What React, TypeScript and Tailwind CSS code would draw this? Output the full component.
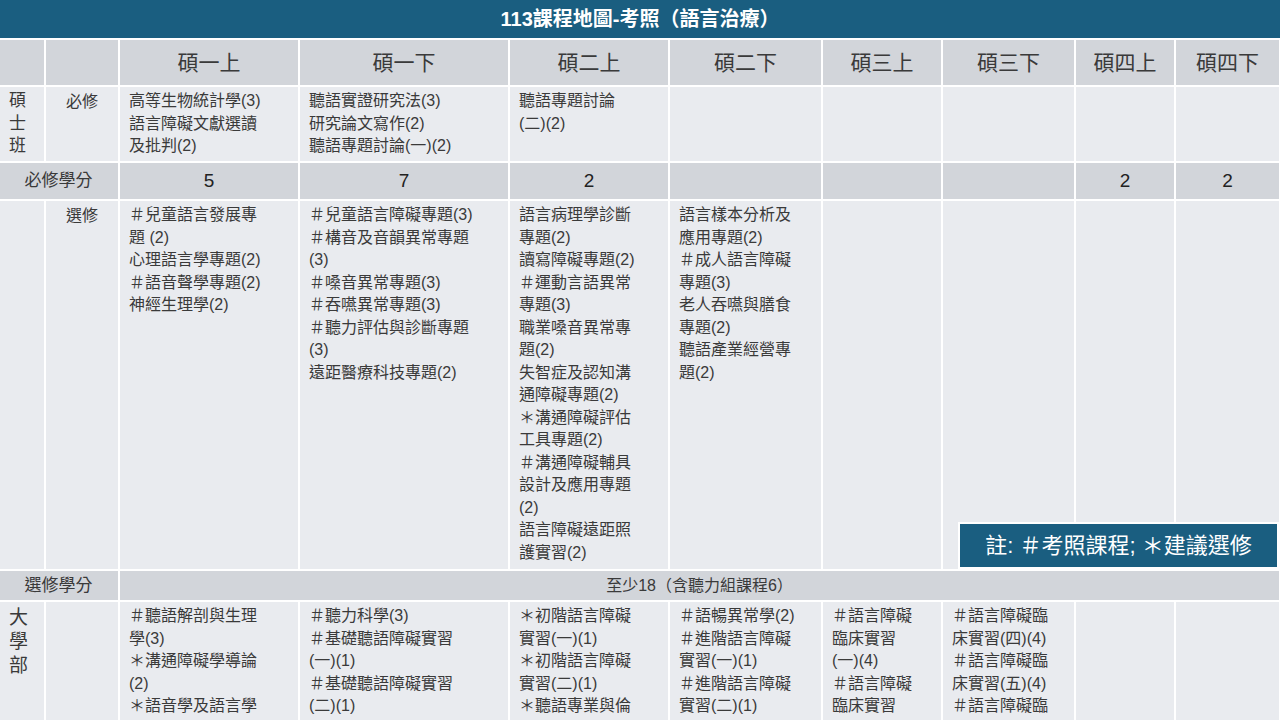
const F = { fontFamily: '"Liberation Sans","Noto Sans CJK TC",sans-serif' };

const cols = ["碩一上", "碩一下", "碩二上", "碩二下", "碩三上", "碩三下", "碩四上", "碩四下"];

const req = [
  ["高等生物統計學(3)", "語言障礙文獻選讀", "及批判(2)"],
  ["聽語實證研究法(3)", "研究論文寫作(2)", "聽語專題討論(一)(2)"],
  ["聽語專題討論", "(二)(2)"],
  [], [], [], [], [],
];
const reqCredits = ["5", "7", "2", "", "", "", "2", "2"];
const elec = [
  ["＃兒童語言發展專", "題 (2)", "心理語言學專題(2)", "＃語音聲學專題(2)", "神經生理學(2)"],
  ["＃兒童語言障礙專題(3)", "＃構音及音韻異常專題", "(3)", "＃嗓音異常專題(3)", "＃吞嚥異常專題(3)", "＃聽力評估與診斷專題", "(3)", "遠距醫療科技專題(2)"],
  ["語言病理學診斷", "專題(2)", "讀寫障礙專題(2)", "＃運動言語異常", "專題(3)", "職業嗓音異常專", "題(2)", "失智症及認知溝", "通障礙專題(2)", "＊溝通障礙評估", "工具專題(2)", "＃溝通障礙輔具", "設計及應用專題", "(2)", "語言障礙遠距照", "護實習(2)"],
  ["語言樣本分析及", "應用專題(2)", "＃成人語言障礙", "專題(3)", "老人吞嚥與膳食", "專題(2)", "聽語產業經營專", "題(2)"],
  [], [], [], [],
];
const ug = [
  ["＃聽語解剖與生理", "學(3)", "＊溝通障礙學導論", "(2)", "＊語音學及語言學"],
  ["＃聽力科學(3)", "＃基礎聽語障礙實習", "(一)(1)", "＃基礎聽語障礙實習", "(二)(1)"],
  ["＊初階語言障礙", "實習(一)(1)", "＊初階語言障礙", "實習(二)(1)", "＊聽語專業與倫"],
  ["＃語暢異常學(2)", "＃進階語言障礙", "實習(一)(1)", "＃進階語言障礙", "實習(二)(1)"],
  ["＃語言障礙", "臨床實習", "(一)(4)", "＃語言障礙", "臨床實習"],
  ["＃語言障礙臨", "床實習(四)(4)", "＃語言障礙臨", "床實習(五)(4)", "＃語言障礙臨"],
  [], [],
];

const light = "bg-[#e9ebef]";
const dark = "bg-[#d2d5da]";

function Cell({ lines, cls = "" }: { lines: string[]; cls?: string }) {
  return (
    <div className={`${light} ${cls} px-[9px] pt-[3px] text-[16px] leading-[22.5px] text-[#3a3a3a] overflow-hidden`}>
      {lines.map((l, i) => <div key={i} className="whitespace-nowrap">{l}</div>)}
    </div>
  );
}

export default function App() {
  return (
    <div style={F} className="relative w-[1280px] h-[720px] overflow-hidden bg-white">
      <div className="h-[38px] bg-[#1a5e80] flex items-center justify-center text-white font-bold text-[20px]">
        113課程地圖-考照（語言治療）
      </div>
      <div className="h-[2px] bg-white" />
      <div
        className="grid gap-[2px] bg-white -mx-[1px]"
        style={{
          gridTemplateColumns: "45px 72px 178px 208px 158px 151px 118px 131px 98px 103px",
          gridTemplateRows: "45px 74px 36px 368px 29px 140px",
        }}
      >
        {/* header row */}
        <div className={dark} />
        <div className={dark} />
        {cols.map((c) => (
          <div key={c} className={`${dark} flex items-center justify-center text-[21px] text-[#3a3a3a]`}>{c}</div>
        ))}
        {/* 必修 */}
        <div className={`${light} pl-[10px] pt-[3px] text-[17px] leading-[22.5px] text-[#3a3a3a]`}>
          <div>碩</div><div>士</div><div>班</div>
        </div>
        <div className={`${light} pl-[20px] pt-[3px] text-[16px] text-[#3a3a3a]`}>必修</div>
        {req.map((l, i) => <Cell key={i} lines={l} />)}
        {/* 必修學分 */}
        <div className={`${dark} col-span-2 flex items-center justify-center text-[17px] text-[#3a3a3a]`}>必修學分</div>
        {reqCredits.map((c, i) => (
          <div key={i} className={`${dark} flex items-center justify-center text-[19px] text-[#222]`}>{c}</div>
        ))}
        {/* 選修 */}
        <div className={light} />
        <div className={`${light} pl-[20px] pt-[3px] text-[16px] text-[#3a3a3a]`}>選修</div>
        {elec.map((l, i) => <Cell key={i} lines={l} />)}
        {/* 選修學分 */}
        <div className={`${dark} col-span-2 flex items-center justify-center text-[17px] text-[#3a3a3a]`}>選修學分</div>
        <div className={`${dark} col-span-8 flex items-center justify-center text-[16px] text-[#3a3a3a]`}>至少18（含聽力組課程6）</div>
        {/* 大學部 */}
        <div className={`${light} pl-[10px] pt-[4px] text-[19px] leading-[24px] text-[#3a3a3a]`}>
          <div>大</div><div>學</div><div>部</div>
        </div>
        <div className={light} />
        {ug.map((l, i) => <Cell key={i} lines={l} />)}
      </div>
      <div className="absolute left-[958px] top-[522px] w-[321px] h-[47px] bg-[#1a5e80] border-2 border-white flex items-center justify-center text-white text-[22px]">
        註: ＃考照課程; ＊建議選修
      </div>
    </div>
  );
}
